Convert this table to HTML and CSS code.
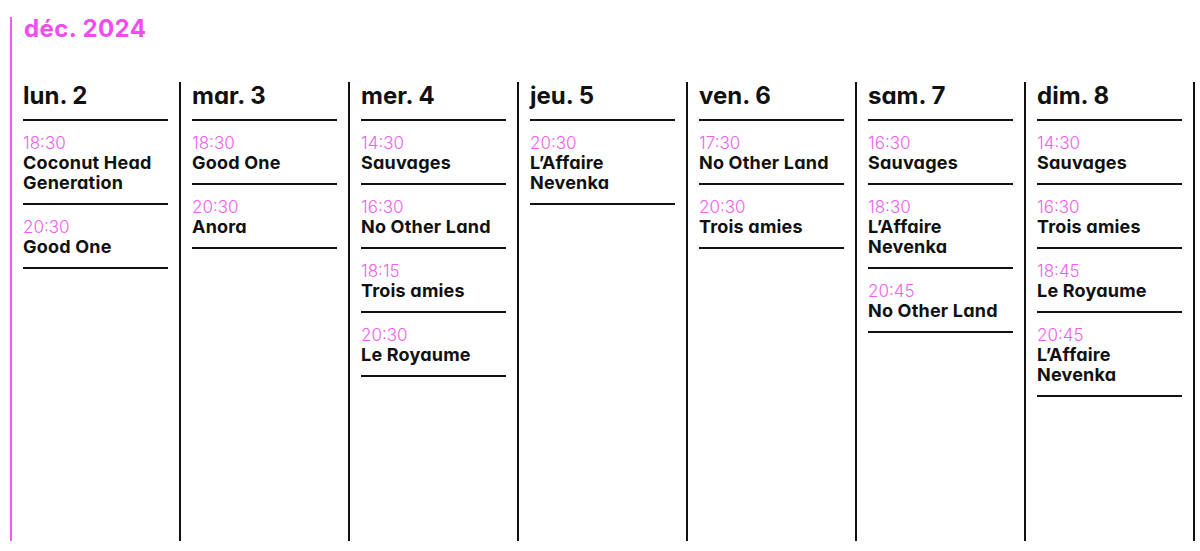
FILE: index.html
```html
<!DOCTYPE html>
<html lang="fr">
<head>
<meta charset="utf-8">
<title>Programme déc. 2024</title>
<link rel="stylesheet" href="styles.css">
</head>
<body>
<div class="cal">
  <h2 class="month">déc. 2024</h2>
  <div class="week">
    <section class="day">
      <h3 class="day-title">lun. 2</h3>
      <ul class="shows">
        <li class="show"><span class="time">18:30</span><span class="title">Coconut Head Generation</span></li>
        <li class="show"><span class="time">20:30</span><span class="title">Good One</span></li>
      </ul>
    </section>
    <section class="day">
      <h3 class="day-title">mar. 3</h3>
      <ul class="shows">
        <li class="show"><span class="time">18:30</span><span class="title">Good One</span></li>
        <li class="show"><span class="time">20:30</span><span class="title">Anora</span></li>
      </ul>
    </section>
    <section class="day">
      <h3 class="day-title">mer. 4</h3>
      <ul class="shows">
        <li class="show"><span class="time">14:30</span><span class="title">Sauvages</span></li>
        <li class="show"><span class="time">16:30</span><span class="title">No Other Land</span></li>
        <li class="show"><span class="time">18:15</span><span class="title">Trois amies</span></li>
        <li class="show"><span class="time">20:30</span><span class="title">Le Royaume</span></li>
      </ul>
    </section>
    <section class="day">
      <h3 class="day-title">jeu. 5</h3>
      <ul class="shows">
        <li class="show"><span class="time">20:30</span><span class="title">L’Affaire Nevenka</span></li>
      </ul>
    </section>
    <section class="day">
      <h3 class="day-title">ven. 6</h3>
      <ul class="shows">
        <li class="show"><span class="time">17:30</span><span class="title">No Other Land</span></li>
        <li class="show"><span class="time">20:30</span><span class="title">Trois amies</span></li>
      </ul>
    </section>
    <section class="day">
      <h3 class="day-title">sam. 7</h3>
      <ul class="shows">
        <li class="show"><span class="time">16:30</span><span class="title">Sauvages</span></li>
        <li class="show"><span class="time">18:30</span><span class="title">L’Affaire Nevenka</span></li>
        <li class="show"><span class="time">20:45</span><span class="title">No Other Land</span></li>
      </ul>
    </section>
    <section class="day">
      <h3 class="day-title">dim. 8</h3>
      <ul class="shows">
        <li class="show"><span class="time">14:30</span><span class="title">Sauvages</span></li>
        <li class="show"><span class="time">16:30</span><span class="title">Trois amies</span></li>
        <li class="show"><span class="time">18:45</span><span class="title">Le Royaume</span></li>
        <li class="show"><span class="time">20:45</span><span class="title">L’Affaire Nevenka</span></li>
      </ul>
    </section>
  </div>
</div>
</body>
</html>
```

FILE: styles.css
```css
html, body {
  margin: 0;
  padding: 0;
  background: #ffffff;
}

body {
  font-family: Inter, "Liberation Sans", sans-serif;
  font-feature-settings: "cv11";
  color: #111111;
}

.cal {
  margin: 17px 0 0 10px;
  height: 524px;
  border-left: 2px solid #f05cf0;
  display: flex;
  flex-direction: column;
}

.month {
  margin: 0 0 41px 0;
  padding-left: 12px;
  font-size: 24px;
  line-height: 24px;
  font-weight: 700;
  letter-spacing: 0.4px;
  color: #f04cee;
}

.week {
  flex: 1;
  display: flex;
}

.day {
  width: 145px;
  flex: none;
  padding: 0 11px;
  border-right: 2px solid #111111;
}

.day-title {
  margin: 0;
  padding-bottom: 9px;
  border-bottom: 2px solid #111111;
  font-size: 24px;
  line-height: 28px;
  font-weight: 700;
}

.shows {
  list-style: none;
  margin: 0;
  padding: 0;
}

.show {
  display: flex;
  flex-direction: column;
  padding: 12px 0 10px;
  border-bottom: 2px solid #111111;
}

.time {
  font-size: 17px;
  line-height: 20px;
  font-weight: 300;
  color: #f060ee;
}

.title {
  font-size: 18px;
  line-height: 20px;
  font-weight: 700;
  letter-spacing: 0.2px;
}
```
